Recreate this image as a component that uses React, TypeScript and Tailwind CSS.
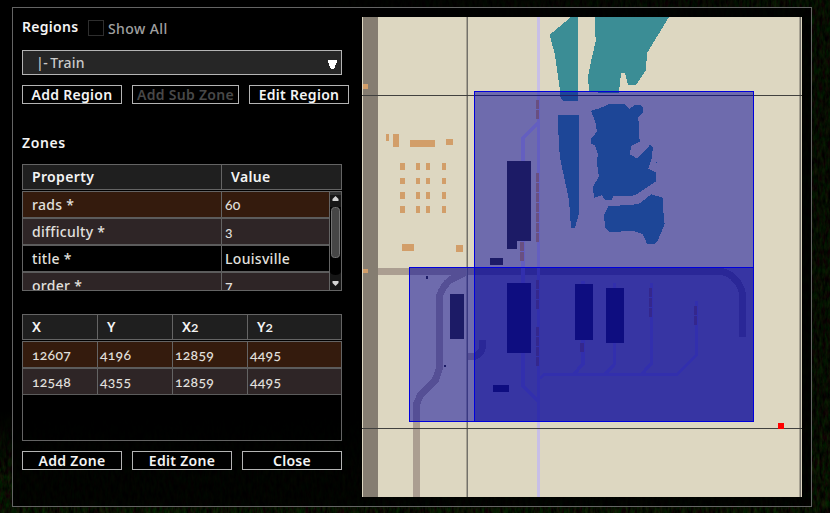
import React from "react";

const sans = "font-['Noto_Sans',sans-serif]";

// Numbers are set in old-style figures, which come from Lato.
function Txt({ children, className = "" }: { children: string; className?: string }) {
  const parts = children.split(/(\d+)/).filter(Boolean);
  return (
    <span className={`whitespace-pre leading-none ${className}`}>
      {parts.map((p, i) =>
        /\d/.test(p) ? (
          <span key={i} className="font-[Lato,sans-serif] text-[14px] oldstyle-nums tracking-[0.25px]">{p}</span>
        ) : (
          p
        ),
      )}
    </span>
  );
}

function Button({ label, className = "", wide = false }: { label: string; className?: string; wide?: boolean }) {
  return (
    <button
      className={`flex h-[19px] shrink-0 items-center justify-center border border-[#b4b4b4] bg-black text-[14px] font-semibold tracking-[0.3px] ${wide ? "w-[107px]" : "w-[100px]"} ${className || "text-[#f4f4f4]"}`}
    >
      <Txt>{label}</Txt>
    </button>
  );
}

const rowTone = ["bg-[#341b0d]", "bg-[#2e2526]", "bg-black", "bg-[#2e2526]"];

function PropertyTable() {
  const rows = [
    ["rads *", "60"],
    ["difficulty *", "3"],
    ["title *", "Louisville"],
    ["order *", "7"],
  ];
  return (
    <div className="mt-[13px] h-[127px] w-[320px]">
      <div className="flex h-[26px] border border-[#646464] bg-[#1f1f1f] text-[14px] font-semibold tracking-[0.35px] text-[#f4f4f4]">
        <div className="flex w-[199px] items-center border-r border-[#646464] pl-[9px]"><Txt>Property</Txt></div>
        <div className="flex items-center pl-[9px]"><Txt>Value</Txt></div>
      </div>
      <div className="mt-px flex h-[100px] overflow-hidden border border-[#646464]">
        <div className="w-[306px] overflow-hidden">
          {rows.map(([k, v], i) => (
            <div key={k} className={`flex h-[27px] border-b-2 border-[#5c5c5c] text-[14px] font-medium tracking-[0.3px] text-[#e2e0de] ${rowTone[i]}`}>
              <div className="flex w-[199px] items-center border-r border-[#646464] pl-[9px]"><Txt>{k}</Txt></div>
              <div className="flex items-center pl-[3px]"><Txt>{v}</Txt></div>
            </div>
          ))}
        </div>
        <div className="flex w-3 flex-col items-center border-l border-[#646464] bg-black">
          <svg width="11" height="98" viewBox="0 0 11 98">
            <rect width="11" height="3" fill="#303030" />
            <rect y="3" width="11" height="12" fill="#161616" />
            <path d="M5.5 4L8.5 7V9H2.5V7Z" fill="#d4d4d4" />
            <rect x="1.5" y="15.5" width="8" height="50" rx="3" fill="#464646" stroke="#737373" />
            <path d="M0 80C1 84 10 84 11 80V98H0Z" fill="#161616" />
            <path d="M5.5 94L8.500 91V89H2.500V91Z" fill="#d4d4d4" />
          </svg>
        </div>
      </div>
    </div>
  );
}

function CoordTable() {
  const rows = [
    ["12607", "4196", "12859", "4495"],
    ["12548", "4355", "12859", "4495"],
  ];
  return (
    <div className="mt-[23px] h-[127px] w-[320px]">
      <div className="flex h-[26px] border border-[#646464] bg-[#1f1f1f] text-[14px] font-semibold text-[#f4f4f4]">
        {["X", "Y", "X2", "Y2"].map((h, i) => (
          <div key={h} className={`flex w-[75px] shrink-0 items-center pl-[9px] ${i < 3 ? "border-r border-[#646464]" : ""}`}>
            <Txt>{h}</Txt>
          </div>
        ))}
      </div>
      <div className="mt-px h-[100px] border border-[#646464]">
        {rows.map((r, i) => (
          <div key={i} className={`flex border-[#5c5c5c] text-[14px] font-medium text-[#e2e0de] ${i ? "h-[26px] border-b" : "h-[27px] border-b-2"} ${rowTone[i]}`}>
            {r.map((v, j) => (
              <div key={j} className={`flex w-[75px] items-center ${j ? "pl-[2px]" : "pl-[9px]"} ${j < 3 ? "border-r border-[#646464]" : ""}`}>
                <Txt>{v}</Txt>
              </div>
            ))}
          </div>
        ))}
      </div>
    </div>
  );
}

const BUILDING = "#383633";
const HOUSE = "#d29e69";
const WATER = "#3b8d95";
const ROAD = "#ab9e91";
const RAIL = "#c8bfe7";

const houses = [
  [363, 84, 5, 5], [363, 269, 5, 4], [386, 134, 3, 7], [393, 134, 6, 13], [410, 140, 25, 7],
  [446, 139, 7, 6], [402, 244, 12, 7], [456, 245, 7, 7],
];
const depots = [
  [507, 161, 24, 80], [507, 241, 10, 8], [490, 258, 13, 7], [507, 283, 24, 70], [493, 385, 16, 7],
  [450, 294, 14, 45], [426, 276, 2, 3], [444, 365, 2, 2], [575, 284, 18, 56], [606, 288, 18, 55],
];
const cars = [
  [536, 100], [536, 110], [536, 173], [536, 183], [536, 193], [536, 203], [536, 213], [536, 223], [536, 233],
  [536, 280], [536, 290], [536, 300], [536, 327], [536, 337], [536, 347], [536, 357],
  [649, 288], [649, 298], [649, 308], [694, 306], [694, 316],
];

function TownMap() {
  return (
    <svg className="shrink-0" width="440" height="480" viewBox="362 17 440 480" shapeRendering="crispEdges">
      <rect x="362" y="17" width="440" height="480" fill="#ddd7c1" />
      <rect x="363" y="17" width="15" height="480" fill="#857d71" />
      <g fill="none" stroke={ROAD} strokeWidth="7">
        <path d="M378 271.500H721C733 273 742 285 742.500 296V337" />
        <path d="M467 271.500L450 280Q443 286 439.500 296V368L435 381L421 394L416 405V497" />
        <path d="M467 356.500H474Q482 354 482.500 347V340" />
      </g>
      <g fill="none" stroke={RAIL} strokeWidth="3.500">
        <path d="M538.500 17V497" strokeWidth="3" />
        <path d="M538.500 123L523 138V386L538.500 402" />
        <path d="M540 379L544 374.500H677L696.500 355V301" strokeWidth="2.800" />
        <path d="M583 281V364L574 374M614.500 283V364L605 374M651.500 283V363L642 374" />
      </g>
      <g fill={WATER}>
        <path d="M571 17H578V101H563L560 96V90L555 55L550 36V34.500Z" />
        <path d="M595 17H669L647 53L646 70L636 85H628L625 73H621L619 92L618 93H598L597 91H589L588 76L592 57L596 40L595 33Z" />
        <path d="M558 115H579V213L575 228H571L569 200L560 158L559 145L558 125Z" />
        <g transform="translate(470 90) scale(.33333)">
          <path d="M363 62L388 55L418 42H464L478 56L496 45H510L518 52V68L505 82L509 155L484 168L479 192L501 206L540 165L549 172L545 205L535 236L557 247V275L500 313L485 318H430L425 329H405L395 316L372 324L369 290L387 260L380 215L384 195L375 166L363 160V147L381 125L376 95Z" />
          <path d="M402 375L415 348L485 345L510 340L543 313L578 323L582 395L584 402L562 455L553 461H531L518 432L490 423L420 426L405 412ZM558 216h3v3h-3z" />
        </g>
      </g>
      <g fill={HOUSE}>
        {houses.map(([x, y, w, h]) => <rect key={`${x}-${y}`} x={x} y={y} width={w} height={h} />)}
        {[[163, 7], [178, 6], [192, 7], [206, 7]].map(([y, h]) =>
          [400, 416, 426, 442].map((x) => <rect key={`${x}-${y}`} x={x} y={y} width={x === 400 ? 5 : 4} height={h} />),
        )}
        {cars.map(([x, y]) => <rect key={`${x}-${y}`} x={x} y={y} width="3" height="9" />)}
        <rect x="520" y="242" width="4" height="9" />
        <rect x="520" y="252" width="4" height="9" />
        <rect x="580" y="343" width="4" height="9" />
      </g>
      <g fill={BUILDING}>
        {depots.map(([x, y, w, h]) => <rect key={`${x}-${y}`} x={x} y={y} width={w} height={h} />)}
      </g>
      <path d="M466 17h1v480h-1zM799 17h1v480h-1z" fill="#a9a494" />
      <path d="M467 17h1v480h-1zM800 17h1v480h-1z" fill="#73716a" />
      <path d="M362 95h440v1H362zM362 428h440v1H362z" fill="#41413f" />
      <g fill="#000099" fillOpacity=".5">
        <rect x="474" y="91" width="280" height="331" />
        <rect x="409" y="267" width="345" height="155" />
      </g>
      <g fill="none" stroke="#0000dc">
        <rect x="474.500" y="91.500" width="279" height="330" />
        <rect x="409.500" y="267.500" width="344" height="154" />
      </g>
      <rect x="778" y="423" width="6" height="6" fill="#ff0000" />
    </svg>
  );
}

function Grass() {
  return (
    <svg className="absolute inset-0" width="830" height="513">
      <defs>
        <filter id="blades" x="0" y="0" width="100%" height="100%" colorInterpolationFilters="sRGB">
          <feTurbulence type="fractalNoise" baseFrequency="0.35 0.12" numOctaves="3" seed="4" />
          <feColorMatrix values="0.17 0 0 0 -0.055  0 0.25 0 0 -0.065  0.05 0 0 0 -0.02  0 0 0 0 1" />
        </filter>
        <linearGradient id="down" x1="0" y1="0" x2="0" y2="1">
          <stop offset=".8" stopColor="#fff" stopOpacity="0" />
          <stop offset=".93" stopColor="#fff" />
        </linearGradient>
        <linearGradient id="across" x1="0" y1="0" x2="1" y2="0">
          <stop offset=".35" stopColor="#fff" stopOpacity="0" />
          <stop offset="1" stopColor="#fff" stopOpacity=".8" />
        </linearGradient>
        <mask id="edges">
          <rect width="830" height="513" fill="url(#down)" />
          <rect width="830" height="513" fill="url(#across)" />
        </mask>
      </defs>
      <rect width="830" height="513" filter="url(#blades)" mask="url(#edges)" />
    </svg>
  );
}

export default function App() {
  return (
    <div className={`relative h-[513px] w-[830px] overflow-hidden bg-black pl-3 pt-[7px] ${sans}`}>
      <Grass />
      <div className="relative flex h-[500px] w-[800px] border border-[#646464] bg-black/80 pl-[9px] pt-[9px]">
        <div className="flex w-[340px] shrink-0 flex-col">
          <div className="flex h-[33px] pt-[3px] text-[14px]">
            <div className="h-4 w-[66px] font-semibold leading-none tracking-[0.3px] text-[#f4f4f4]"><Txt>Regions</Txt></div>
            <div className="h-4 w-4 border border-[#2e2e2e]" />
            <div className="ml-1 pt-[2px] font-medium leading-none tracking-[0.4px] text-[#a0a0a0]"><Txt>Show All</Txt></div>
          </div>
          <div className="flex h-[25px] w-[320px] items-center justify-between border border-[#b4b4b4] bg-[#262626] pl-[13px] pr-1 text-[14px] font-medium text-[#cacaca]">
            <span className="flex leading-none"><Txt className="tracking-[-0.5px]">|- </Txt><Txt className="tracking-[0.2px]">Train</Txt></span>
            <svg width="9" height="9" className="mt-[3px]" shapeRendering="crispEdges"><path d="M0 0H9V2L6 9H3L0 2Z" fill="#fff" /></svg>
          </div>
          <div className="mt-[10px] flex gap-[10px]">
            <Button label="Add Region" />
            <Button label="Add Sub Zone" wide className="text-[#484848]" />
            <Button label="Edit Region" />
          </div>
          <div className="mt-[32px] h-[15px] text-[14px] font-semibold leading-none tracking-[0.6px] text-[#f4f4f4]"><Txt>Zones</Txt></div>
          <PropertyTable />
          <CoordTable />
          <div className="mt-[10px] flex gap-[10px]">
            <Button label="Add Zone" />
            <Button label="Edit Zone" />
            <Button label="Close" />
          </div>
        </div>
        <TownMap />
      </div>
    </div>
  );
}
